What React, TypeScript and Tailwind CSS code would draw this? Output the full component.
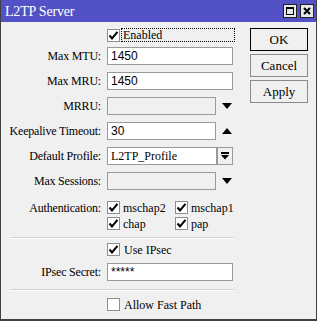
import React from "react";

function Check({ checked }: { checked: boolean }) {
  return (
    <div className="w-[13px] h-[13px] border border-[#8f8f8f] bg-white flex items-center justify-center shrink-0">
      {checked && (
        <svg width="11" height="11" viewBox="0 0 11 11">
          <path d="M1.5 5.5 L4 8.5 L9.5 1.8" fill="none" stroke="#000" strokeWidth="2" />
        </svg>
      )}
    </div>
  );
}

function Label({ children }: { children: React.ReactNode }) {
  return <div className="w-[101px] text-right pr-[1px] text-[12px] leading-none text-black whitespace-nowrap tracking-[-0.2px]">{children}</div>;
}

function Input({ value, w = "w-[126px]", disabled = false, sans = true }: { value?: string; w?: string; disabled?: boolean; sans?: boolean }) {
  return (
    <div
      className={`${w} h-[18px] border border-[#9a9a9a] ${disabled ? "bg-[#f0f0f0]" : "bg-white"} flex items-center pl-[3px] text-[12px] text-black ${sans ? "font-['Liberation_Sans',Arial,sans-serif]" : ""}`}
    >
      {value}
    </div>
  );
}

function Down() {
  return (
    <svg width="10" height="6" viewBox="0 0 10 6" className="ml-[6px]">
      <path d="M0 0 H10 L5 6 Z" fill="#000" />
    </svg>
  );
}
function Up() {
  return (
    <svg width="10" height="6" viewBox="0 0 10 6" className="ml-[6px]">
      <path d="M0 6 H10 L5 0 Z" fill="#000" />
    </svg>
  );
}

function Row({ label, children, mt }: { label: string; children: React.ReactNode; mt: string }) {
  return (
    <div className={`flex items-center h-[18px] ${mt}`}>
      <Label>{label}</Label>
      <div className="ml-[5px] flex items-center">{children}</div>
    </div>
  );
}

function Btn({ children, def = false }: { children: React.ReactNode; def?: boolean }) {
  return (
    <div
      className={`w-[58px] h-[23px] flex items-center justify-center text-[13px] text-black bg-[#f0f0f0] border ${def ? "border-black" : "border-[#8a8a8a]"}`}
    >
      {children}
    </div>
  );
}

export default function App() {
  return (
    <div className="font-['Liberation_Serif','DejaVu_Serif',serif] w-[317px] h-[321px] flex flex-col bg-[#404040] pl-[1px] pr-[1px] pb-[2px]">
      <div className="h-[22px] bg-[#5252c6] flex items-center justify-between pl-[4px] pr-[2px]">
        <span className="text-white text-[14px] tracking-[-0.2px]">L2TP Server</span>
        <div className="flex gap-[3px]">
          <div className="w-[14px] h-[14px] bg-[#e8e8e8] border border-[#202020] flex items-center justify-center">
            <div className="w-[8px] h-[8px] border border-black border-t-2" />
          </div>
          <div className="w-[14px] h-[14px] bg-[#e8e8e8] border border-[#202020] flex items-center justify-center">
            <svg width="8" height="8" viewBox="0 0 8 8">
              <path d="M1 1 L7 7 M7 1 L1 7" stroke="#000" strokeWidth="2" />
            </svg>
          </div>
        </div>
      </div>
      <div className="flex-1 flex bg-[#f0f0f0]">
        <div className="w-[241px] flex flex-col">
          <div className="flex items-center h-[14px] mt-[6px]">
            <div className="w-[106px]" />
            <Check checked />
            <div className="ml-[1px] w-[114px] h-[14px] border border-dotted border-black flex items-center pl-[1px] text-[12px]">Enabled</div>
          </div>
          <Row label="Max MTU:" mt="mt-[5px]"><Input value="1450" /></Row>
          <Row label="Max MRU:" mt="mt-[7px]"><Input value="1450" /></Row>
          <Row label="MRRU:" mt="mt-[7px]"><Input w="w-[109px]" disabled /><Down /></Row>
          <Row label="Keepalive Timeout:" mt="mt-[7px]"><Input value="30" w="w-[109px]" /><Up /></Row>
          <Row label="Default Profile:" mt="mt-[7px]">
            <Input value="L2TP_Profile" w="w-[110px]" sans={false} />
            <div className="w-[16px] h-[18px] border border-[#9a9a9a] bg-[#f0f0f0] flex items-center justify-center">
              <svg width="8" height="8" viewBox="0 0 8 8">
                <rect x="0" y="0" width="8" height="2" fill="#000" />
                <path d="M0 3 H8 L4 7.5 Z" fill="#000" />
              </svg>
            </div>
          </Row>
          <Row label="Max Sessions:" mt="mt-[7px]"><Input w="w-[109px]" disabled /><Down /></Row>
          <div className="flex items-center h-[13px] mt-[11px]">
            <Label>Authentication:</Label>
            <div className="ml-[5px] flex items-center w-[68px]"><Check checked /><span className="ml-[3px] text-[12px]">mschap2</span></div>
            <div className="flex items-center"><Check checked /><span className="ml-[3px] text-[12px]">mschap1</span></div>
          </div>
          <div className="flex items-center h-[13px] mt-[3px]">
            <div className="w-[101px]" />
            <div className="ml-[5px] flex items-center w-[68px]"><Check checked /><span className="ml-[3px] text-[12px]">chap</span></div>
            <div className="flex items-center"><Check checked /><span className="ml-[3px] text-[12px]">pap</span></div>
          </div>
          <div className="ml-[9px] w-[224px] h-[2px] mt-[7px] border-t border-[#d0d0d0] border-b border-b-white" />
          <div className="flex items-center h-[13px] mt-[4px]">
            <div className="w-[106px]" />
            <Check checked />
            <span className="ml-[4px] text-[12px]">Use IPsec</span>
          </div>
          <Row label="IPsec Secret:" mt="mt-[7px]"><Input value="*****" /></Row>
          <div className="ml-[9px] w-[224px] h-[2px] mt-[8px] border-t border-[#d0d0d0] border-b border-b-white" />
          <div className="flex items-center h-[13px] mt-[7px]">
            <div className="w-[106px]" />
            <Check checked={false} />
            <span className="ml-[4px] text-[12px]">Allow Fast Path</span>
          </div>
        </div>
        <div className="flex flex-col pl-[8px] pt-[6px] gap-[3px]">
          <Btn def>OK</Btn>
          <Btn>Cancel</Btn>
          <Btn>Apply</Btn>
        </div>
      </div>
    </div>
  );
}
